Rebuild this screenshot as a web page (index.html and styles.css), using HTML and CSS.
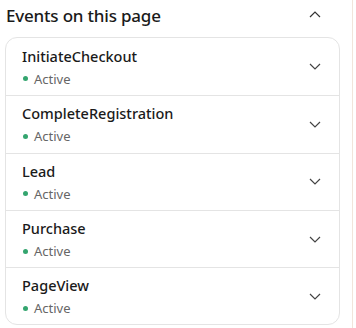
FILE: index.html
```html
<!DOCTYPE html>
<html>
  <head>
    <link rel="stylesheet" href="styles.css">
  </head>
  <body>
    <main class="panel">
      <header class="panel-head">
        <h2>Events on this page</h2>
        <svg class="chev" width="12" height="7" viewBox="0 0 12 7"><path d="M1 6 L6 1 L11 6" fill="none" stroke="#333" stroke-width="1.2"/></svg>
      </header>
      <ul class="events">
        <li class="event">
          <div class="event-text">
            <span class="event-name">InitiateCheckout</span>
            <span class="status"><i class="dot"></i>Active</span>
          </div>
          <svg class="chev" width="12" height="7" viewBox="0 0 12 7"><path d="M1 1 L6 6 L11 1" fill="none" stroke="#444" stroke-width="1.2"/></svg>
        </li>
        <li class="event">
          <div class="event-text">
            <span class="event-name">CompleteRegistration</span>
            <span class="status"><i class="dot"></i>Active</span>
          </div>
          <svg class="chev" width="12" height="7" viewBox="0 0 12 7"><path d="M1 1 L6 6 L11 1" fill="none" stroke="#444" stroke-width="1.2"/></svg>
        </li>
        <li class="event">
          <div class="event-text">
            <span class="event-name">Lead</span>
            <span class="status"><i class="dot"></i>Active</span>
          </div>
          <svg class="chev" width="12" height="7" viewBox="0 0 12 7"><path d="M1 1 L6 6 L11 1" fill="none" stroke="#444" stroke-width="1.2"/></svg>
        </li>
        <li class="event">
          <div class="event-text">
            <span class="event-name">Purchase</span>
            <span class="status"><i class="dot"></i>Active</span>
          </div>
          <svg class="chev" width="12" height="7" viewBox="0 0 12 7"><path d="M1 1 L6 6 L11 1" fill="none" stroke="#444" stroke-width="1.2"/></svg>
        </li>
        <li class="event">
          <div class="event-text">
            <span class="event-name">PageView</span>
            <span class="status"><i class="dot"></i>Active</span>
          </div>
          <svg class="chev" width="12" height="7" viewBox="0 0 12 7"><path d="M1 1 L6 6 L11 1" fill="none" stroke="#444" stroke-width="1.2"/></svg>
        </li>
      </ul>
    </main>
  </body>
</html>
```
FILE: styles.css
```css
body {
  margin: 0;
  background: #fff;
  font-family: "Noto Sans", "Open Sans", sans-serif;
  color: #1a1a1a;
}
.panel {
  width: 353px;
  height: 328px;
  border-right: 1px solid #f1e5db;
  box-sizing: border-box;
  padding: 0 12px 0 5px;
}
.panel-head {
  display: flex;
  align-items: center;
  justify-content: space-between;
  height: 37px;
  padding: 0 19px 0 1px;
}
.panel-head h2 {
  margin: 0;
  font-size: 17px;
  font-weight: 500;
  letter-spacing: -0.2px;
  position: relative;
  top: -3px;
}
.panel-head .chev {
  position: relative;
  top: -4px;
}
.events {
  list-style: none;
  margin: 0;
  padding: 0;
  border: 1px solid #e4e4e4;
  border-radius: 12px;
}
.event {
  display: flex;
  align-items: center;
  justify-content: space-between;
  height: 57.3px;
  box-sizing: border-box;
  padding: 0 18px 0 16px;
}
.event + .event {
  border-top: 1px solid #e4e4e4;
}
.event-text {
  display: flex;
  flex-direction: column;
  gap: 4px;
}
.event-name {
  font-size: 14.5px;
  font-weight: 500;
  line-height: 20px;
}
.status {
  display: flex;
  align-items: center;
  font-size: 13px;
  color: #666;
  line-height: 18px;
}
.dot {
  width: 5px;
  height: 5px;
  border-radius: 50%;
  background: #34a56f;
  margin: 0 6px 0 1px;
}
```
